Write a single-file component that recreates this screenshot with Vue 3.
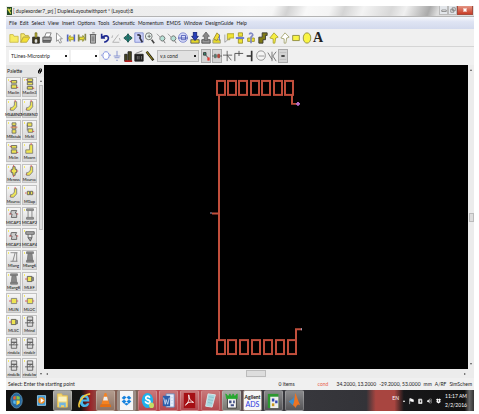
<script setup>
import { ref } from 'vue';

const menus = ['File', 'Edit', 'Select', 'View', 'Insert', 'Options', 'Tools', 'Schematic', 'Momentum', 'EMDS', 'Window', 'DesignGuide', 'Help'];

// toolbar buttons, grouped the way they sit between separators
const groups = [
  ['new', 'open', 'save', 'print'],
  ['cursor'],
  ['moveL', 'moveR', 'trash'],
  ['undo', 'rotate'],
  ['pan', 'fit', 'zoom', 'zoomIn', 'zoomOut', 'zoomSel'],
  ['push', 'pop', 'clean'],
  ['flip', 'globe', 'lamp'],
  ['trace', 'polyY', 'poly', 'rect', 'circle', 'text'],
];
const insertTools = ['port', 'ground', 'book', 'clap', 'pencil'];
const snapTools = ['snapA', 'snapB', 'pin', 'vertex', 'edge', 'arc', 'cross', 'grid'];
const pressed = ['snapA', 'snapB', 'grid'];

// plain stroke/fill shapes on a 12 x 14 grid: [path, fill, stroke, width]
const icons = {
  new: [['M1 3h4l1 2h5v7H1z', '#f7ec62', '#c9b94a']],
  open: [['M1 2h4l1 2h4v2H4L1 12z', '#f7ea6a', '#b8a73d'], ['M4 6h8l-4 6H1z', '#f3df32', '#b8a73d']],
  save: [['M2 6h8v7H2z', '#3f3a20', '#222'], ['M5 9h2v3H5z', '#fff', '#ddd'], ['M5 6V1h2v5', '#eadb26', '#65601e']],
  print: [['M3 6l2-5h6L9 6z', '#fff', '#777'], ['M1 6h10v4H1z', '#aaa', '#555'], ['M1 10h9v2H1z', '#777', '#555']],
  cursor: [['M3 1v10l2-2 2 4 2-1-2-4h3z', '#fff', '#888']],
  moveL: [['M2 3v8M10 3v8', 'none', '#5567c0', 2], ['M3 7l2-3v2h4v3H5v2z', '#f0e22e', '#a39a30']],
  moveR: [['M2 3v8M10 2v8', 'none', '#85884e', 2], ['M9 7L7 4v2H3v3h4v2z', '#f0e22e', '#8a8a30']],
  trash: [['M3 3h6v10H3z', '#bbb', '#555'], ['M2 3h8M5 1h3M5 5v6M7 5v6', 'none', '#666']],
  undo: [['M2 2v5h4M3 6c8-5 10 4 2 6', 'none', '#1f2b91', 2]],
  rotate: [['M2 12h8M2 12L9 3M2 4l-1 3M10 7l1 3', 'none', '#aaa']],
  pan: [['M6 2l2 3H7v1h2V5l2 2-2 2V8H7v1h1l-2 3-2-3h1V8H3v1L1 7l2-2v1h2V5H4z', '#137e73', '#174c48']],
  fit: [['M1 1h10v11H1z', '#cdd2f8', '#7c88d0'], ['M4 4a2 2 0 1 1 3 3l3 5', 'none', '#334', 2]],
  zoom: [['M5 1a4 4 0 1 1-1 8 4 4 0 0 1 1-8M3 5h4M5 3v4', '#e9f3ef', '#666'], ['M8 9l3 4', 'none', '#444', 2]],
  zoomIn: [['M1 2l4 4', 'none', '#999'], ['M6 5a3 3 0 1 1 0 5 3 3 0 0 1 0-5M9 10l2 3', '#b7e1d6', '#666']],
  zoomOut: [['M1 2l4 4', 'none', '#999'], ['M6 5a3 3 0 1 1 0 5 3 3 0 0 1 0-5M9 10l2 3', '#b7e1d6', '#666']],
  zoomSel: [['M6 1c7 0 7 11 0 11S-1 1 6 1', '#dfe3fc', '#7079c8'], ['M0 7h12M4 4h5v5H4z', 'none', '#4450ae']],
  push: [['M1 9h10v4H1z', '#e5d829', '#555'], ['M4 0h4v5h2l-4 5-4-5h2z', '#2940b8', '#16246f']],
  pop: [['M1 9h10v4H1z', '#999', '#444'], ['M4 10h4V5h2L6 0 2 5h2z', '#888', '#666']],
  clean: [['M1 9h9v4H1z', '#e5d829', '#998'], ['M6 1l3 3-3 6-4-2z', '#f2df32', '#96852d'], ['M9 3v7', 'none', '#5567c8']],
  flip: [['M4 2h8v5H7v2H4z', '#efe334', '#a8a02d'], ['M1 12l6-5M1 3v9', 'none', '#999']],
  globe: [['M4 1h5v4H4zM4 8h5v5H4z', '#efe334', '#98902d'], ['M1 7h10', 'none', '#5a6ccf', 2]],
  lamp: [['M2 7h8v4H2z', '#efe334', '#98902d'], ['M4 3a2 2 0 1 1 4 1L6 6v7', 'none', '#8088c4', 2]],
  trace: [['M11 1H5v5H1v7h5V9h3V4h2z', '#817b16', '#333']],
  polyY: [['M6 1l5 5-3 1-1 6H5V8L1 7z', '#f6ef42', '#a8a131']],
  poly: [['M6 1l5 5-3 1-1 6H5V8L1 7z', '#fff', '#a0a068']],
  rect: [['M2 4h8v6H2z', '#faf545', '#88863a']],
  circle: [['M6 1c6 0 6 12 0 12S0 1 6 1', '#faf545', '#88863a']],
  port: [['M6 2c5 0 5 9 0 9S1 2 6 2M0 6h1M10 6h2', '#fff', '#7080dd']],
  ground: [['M6 1v6M2 7h8M3 9h6M5 12h2', 'none', '#7a88cc']],
  book: [['M2 5h3v8H2zM6 2h4v11H6z', '#4a4720', '#222'], ['M2 13h9', 'none', '#b51f1f', 2]],
  clap: [['M1 5h10v8H1z', '#222', '#222'], ['M2 4l8-3M4 7v4M6 7v4M9 7v4', 'none', '#777']],
  pencil: [['M2 2l8 10', 'none', '#24210e', 3], ['M2 2l7 9', 'none', '#c5b42b', 1]],
  snapA: [['M3 3h3v3H3z', '#3b8f72', '#333'], ['M6 6l3 4', 'none', '#444'], ['M8 9h2v3H8z', '#e63025', '#e6605a']],
  snapB: [['M0 7h12', 'none', '#555'], ['M3 5h2v4H3z', '#3b8f72', '#666'], ['M7 5h2v4H7z', '#cf4e28', '#944']],
  pin: [['M5 1v12M0 6h11M5 6l5 6', 'none', '#555']],
  vertex: [['M1 13V4h10M6 1v6', 'none', '#444']],
  edge: [['M8 1v12M2 7h6', 'none', '#333', 2]],
  arc: [['M6 1c7 0 7 11 0 11S-1 1 6 1M3 7h7', '#f4f4f4', '#888']],
  cross: [['M1 3l5 8M6 2v11M7 7l4-5M7 7l4 6', 'none', '#666']],
  grid: [['M2 3h8M2 11h8', 'none', '#bbb'], ['M4 7h4', 'none', '#333', 2]],
};

// palette component symbols
const Y = '#eee453';
const sym = {
  line: [['M3 3h7v3H3zM3 8h7v4H3z', Y, '#555'], ['M1 4h2M10 11h2', 'none', '#d44']],
  line3: [['M3 1h7v3H3zM3 5h7v3H3zM3 10h7v3H3z', Y, '#555'], ['M1 2h2M10 12h2', 'none', '#d44']],
  bend: [['M7 2h3v6l-4 4H2V9h2l3-3z', Y, '#777'], ['M8 0v2M1 11h1', 'none', '#d44']],
  step: [['M4 1h5v3H4zM4 5h5v3H4zM4 9h5v4H4z', Y, '#666'], ['M2 6h9', 'none', '#d66']],
  curl: [['M3 1h6v4H3zM4 8h6v4H4z', Y, '#666'], ['M3 3v7', 'none', '#666'], ['M10 11h2', 'none', '#d44']],
  corn: [['M6 2h4v10H1V8h5z', Y, '#777'], ['M8 0v2', 'none', '#d44']],
  cros: [['M5 2h3v3h2v4H8v3H5V9H3V5h2z', Y, '#555'], ['M6 0v2M1 7h2M10 7h2M6 12v2', 'none', '#d44']],
  gap: [['M3 5h3v4H3zM7 5h3v4H7z', Y, '#555'], ['M0 7h2M11 7h1', 'none', '#d44']],
  cap: [['M3 3h7l-2 3h2v5H3l1-4H2z', '#ccc', '#555'], ['M0 7h3M10 7h2', 'none', '#d44']],
  beam: [['M2 1h9v2H2zM2 11h9v2H2zM4 3v8M9 3v8', '#999', '#777']],
  gnd: [['M1 2h11v3H1zM4 5v4M9 5v4M4 9h5l-2 4z', '#aaa', '#555']],
  lang: [['M2 2h9M2 12h9M8 2L5 12M10 2v10', '#bbb', '#777']],
  langs: [['M2 1h9v2H2zM2 11h9v2H2zM4 3h5l1 8H3z', '#888', '#777']],
  ref: [['M3 4h6v6H3z', Y, '#555'], ['M9 5h2v4H9z', '#999', '#666'], ['M0 7h3', 'none', '#d44']],
  stub: [['M3 4h7v6H3z', Y, '#777'], ['M0 7h3M10 7h2', 'none', '#d44']],
  ind: [['M3 1h7v4H3zM3 5h7v7H3z', '#ddd', '#555'], ['M0 8h12M5 8l3-3', 'none', '#555']],
};
const palette = [
  ['Maclin', 'line'], ['Maclin3', 'line3'],
  ['MSABND', 'bend'], ['MSBEND', 'bend'],
  ['MBstub', 'step'], ['Mcfil', 'curl'],
  ['Mclin', 'line'], ['Mcorn', 'corn'],
  ['Mcross', 'cros'], ['Mcurve', 'bend'],
  ['Mcurve', 'bend'], ['MGap', 'gap'],
  ['MICAP1', 'cap'], ['MICAP2', 'beam'],
  ['MICAP3', 'cap'], ['MICAP4', 'gnd'],
  ['Mlang', 'lang'], ['Mlang6', 'langs'],
  ['Mlang8', 'langs'], ['MLEF', 'ref'],
  ['MLIN', 'stub'], ['MLOC', 'stub'],
  ['MLSC', 'ref'], ['Mrind', 'ind'],
  ['rindela', 'ind'], ['rindelr', 'ind'],
  ['rindelb', 'ind'], ['rindelw', 'ind'],
];

const topRings = [217, 228, 239, 251, 262, 274, 285];
const bottomRings = [217, 228, 240, 252, 264, 276, 288];

const library = ref('TLines-Microstrip');
const history = ref('');
const layer = ref('v,s cond');
</script>

<template>
  <div class="screen">
    <header class="title">
      <svg class="logo" viewBox="0 0 8 10" preserveAspectRatio="none"><path d="M0 0h8v10H0z" fill="#234b25" /><path d="M1 2l5 6M6 2L3 5" stroke="#d9d94a" stroke-width="2" /></svg>
      <span class="caption">[ duplexorder7_prj ] DuplexLayoutwithport * (Layout):8</span>
      <button class="win" aria-label="Minimize"><svg viewBox="0 0 8 8"><path d="M1 4h6v2H1z" fill="#fff" stroke="#777" /></svg></button>
      <button class="win" aria-label="Restore"><svg viewBox="0 0 8 8"><path d="M3 1h4v4H3zM1 3h4v4H1z" fill="#eee" stroke="#777" /></svg></button>
      <button class="win close" aria-label="Close"><svg viewBox="0 0 8 8"><path d="M2 2l4 4M6 2L2 6" stroke="#fff" stroke-width="2" /></svg></button>
    </header>

    <nav class="menu">
      <button v-for="m in menus" :key="m">{{ m }}</button>
    </nav>

    <div class="toolbar">
      <div v-for="(g, i) in groups" :key="i" class="group">
        <button v-for="name in g" :key="name" class="tool" :aria-label="name">
          <span v-if="name === 'text'" class="letter">A</span>
          <svg v-else viewBox="0 0 12 14" preserveAspectRatio="none">
            <path v-for="(p, k) in icons[name]" :key="k" :d="p[0]" :fill="p[1]" :stroke="p[2]" :stroke-width="p[3] || 1" />
          </svg>
        </button>
      </div>
    </div>

    <div class="toolbar second">
      <select v-model="library" class="pick wide" aria-label="Palette library"><option>TLines-Microstrip</option></select>
      <select v-model="history" class="pick short" aria-label="Component history"><option></option></select>
      <div class="group">
        <button v-for="name in insertTools" :key="name" class="tool" :aria-label="name">
          <svg viewBox="0 0 12 14" preserveAspectRatio="none">
            <path v-for="(p, k) in icons[name]" :key="k" :d="p[0]" :fill="p[1]" :stroke="p[2]" :stroke-width="p[3] || 1" />
          </svg>
        </button>
      </div>
      <select v-model="layer" class="pick layer" aria-label="Layer"><option>v,s cond</option></select>
      <div class="group">
        <button v-for="name in snapTools" :key="name" class="tool" :class="{ on: pressed.includes(name) }" :aria-label="name">
          <svg viewBox="0 0 12 14" preserveAspectRatio="none">
            <path v-for="(p, k) in icons[name]" :key="k" :d="p[0]" :fill="p[1]" :stroke="p[2]" :stroke-width="p[3] || 1" />
          </svg>
        </button>
      </div>
    </div>

    <main class="work">
      <aside class="palette">
        <div class="phead">
          <span>Palette</span>
          <svg viewBox="0 0 8 10"><path d="M3 1h4v5H3zM1 4h4v5H1z" fill="#fff" stroke="#111" stroke-width="2" /></svg>
        </div>
        <div class="pbody">
          <div class="parts">
            <button v-for="(c, i) in palette" :key="i" class="part">
              <svg viewBox="0 0 13 14" preserveAspectRatio="none">
                <path v-for="(p, k) in sym[c[1]]" :key="k" :d="p[0]" :fill="p[1]" :stroke="p[2]" />
              </svg>
              <span>{{ c[0] }}</span>
            </button>
          </div>
          <div class="vbar">
            <i class="up"></i>
            <i class="thumb"></i>
            <i class="rest"></i>
            <i class="down"></i>
          </div>
        </div>
      </aside>

      <section class="sheet">
        <svg class="canvas" viewBox="44 65 424 305" preserveAspectRatio="none">
          <g fill="none" stroke="#c14f3c" stroke-width="2">
            <rect v-for="x in topRings" :key="'t' + x" :x="x" y="81" width="8" height="14" />
            <rect v-for="x in bottomRings" :key="'b' + x" :x="x" y="341" width="8" height="14" />
            <path d="M219 95V341M212 214H219M292 95v9h5M296 341v-11h6" />
          </g>
          <path d="M297 102h2v1h1v2h-1v1h-2v-1h-1v-2h1z" fill="#b26ac0" />
          <path d="M210 213h2v1h-2zM301 329h1v2h-1z" fill="#9b9fc0" />
        </svg>
        <div class="side">
          <i class="up"></i>
          <i class="knob"></i>
          <i class="down"></i>
        </div>
        <div class="bottom">
          <i class="left"></i>
          <i class="knob"></i>
          <i class="right"></i>
        </div>
      </section>
    </main>

    <footer class="status">
      <span class="hint">Select: Enter the starting point</span>
      <span class="items">0 items</span>
      <span class="cond">cond</span>
      <span>34.2000, 13.2000</span>
      <span>-29.2000, 53.0000</span>
      <span>mm</span>
      <span>A/RF</span>
      <span>SimSchem</span>
    </footer>

    <div class="taskbar">
      <button class="task bare start" aria-label="Start">
        <svg viewBox="0 0 16 18" preserveAspectRatio="none"><ellipse cx="8" cy="9" rx="7" ry="8" fill="#2769a0" stroke="#5f94b6" /><path d="M4 5l3-1v4H4z" fill="#f0652f" /><path d="M8 4l4 1v3H8z" fill="#8cc63f" /><path d="M4 9h3v4l-3-1z" fill="#59b9ee" /><path d="M8 9h4v3l-4 2z" fill="#fbd13d" /></svg>
      </button>
      <button class="task bare" aria-label="Media Player">
        <svg viewBox="0 0 16 18"><path d="M3 3h10v12H3z" fill="#3d9bd8" stroke="#a6d6f4" /><circle cx="8" cy="9" r="4" fill="#f28a20" /><path d="M7 6l4 3-4 3z" fill="#fff" /></svg>
      </button>
      <button class="task lit" aria-label="Explorer">
        <svg viewBox="0 0 16 18" preserveAspectRatio="none"><path d="M2 2h5l1 2h6v12H2z" fill="#f3d777" stroke="#e9c24e" /><path d="M3 5h10v5H3z" fill="#fbf2c0" /><path d="M4 11h8v5h-2v-2H6v2H4z" fill="#71b5df" /></svg>
      </button>
      <button class="task bare" aria-label="Internet Explorer">
        <svg viewBox="0 0 16 18" preserveAspectRatio="none"><path d="M8 3c4 0 6 3 6 7H6c0 4 4 4 5 2h3c-1 3-3 4-6 4-8 0-8-13 0-13M6 8h5c0-3-5-3-5 0" fill="#48b8ed" fill-rule="evenodd" /><path d="M2 16C-1 14 4 3 15 2" fill="none" stroke="#f3c93d" stroke-width="2" /></svg>
      </button>
      <button class="task tan" aria-label="VLC">
        <svg viewBox="0 0 16 18" preserveAspectRatio="none"><path d="M7 1h2l4 12H3z" fill="#f58220" /><path d="M6 5h4l1 4H5z" fill="#eee" /><path d="M2 13h12l1 3H1z" fill="#e66f10" /></svg>
      </button>
      <button class="task white" aria-label="Dropbox">
        <svg viewBox="0 0 16 18"><path d="M5 3l3 2-3 3-3-2zM11 3l3 3-3 2-3-3zM5 8l3 2-3 3-3-3zM11 8l3 2-3 3-3-3zM8 12l3 1-3 2-3-2z" fill="#1683df" /></svg>
      </button>
      <button class="task rose" aria-label="Skype">
        <svg viewBox="0 0 16 18" preserveAspectRatio="none"><ellipse cx="8" cy="9" rx="7" ry="8" fill="#1eb2ec" /><path d="M11 6c-2-3-6-1-5 1s6 1 5 4c-1 2-5 1-6-1" fill="none" stroke="#fff" stroke-width="2" /><circle cx="13" cy="14" r="3" fill="#c2dc67" /></svg>
      </button>
      <button class="task rose" aria-label="Word">
        <svg viewBox="0 0 16 18" preserveAspectRatio="none"><path d="M5 2h10v14H5z" fill="#e8eefa" stroke="#6589bd" /><path d="M1 4h9v11H1z" fill="#2b5eab" /><path d="M2 6l2 7 1-5 2 5 2-7M11 6h3M11 9h3M11 12h3" fill="none" stroke="#c6d9f2" /></svg>
      </button>
      <button class="task rose" aria-label="Reader">
        <svg viewBox="0 0 16 18" preserveAspectRatio="none"><path d="M1 1h14v16H1z" fill="#a50f14" /><path d="M7 3c1 5 0 8-4 11 2-3 6-4 10-3-3-1-6-4-6-8z" fill="none" stroke="#fff" /></svg>
      </button>
      <button class="task rose" aria-label="Notepad">
        <svg viewBox="0 0 16 18" preserveAspectRatio="none"><path d="M5 2l9 1-4 13-8-1z" fill="#a9d7df" stroke="#d8eef2" /><path d="M6 5l6 1M5 8l6 1M5 11l5 1" stroke="#8cc0cc" /></svg>
      </button>
      <button class="task lit" aria-label="Layout">
        <svg viewBox="0 0 16 18" preserveAspectRatio="none"><path d="M3 5h11v12H3z" fill="#f5f5f5" stroke="#333" /><path d="M1 2l3 3 2-3 2 3 2-3 2 3 3-3v5H2z" fill="#26a92f" stroke="#26a92f" /><path d="M5 9h3v3H5zM10 9h2v3h-2zM7 13h4v2H7z" fill="#414f84" /></svg>
      </button>
      <button class="task white ads"><b>Agilent</b><span>ADS</span></button>
      <button class="task gray" aria-label="Schematic">
        <svg viewBox="0 0 16 18" preserveAspectRatio="none"><path d="M1 2h13v15H1z" fill="#2c9730" /><path d="M4 5h10v12H4z" fill="#eee" /><path d="M6 7h3v3H6zM10 9h3v3h-3z" fill="#3048b0" /><path d="M6 12h3v3H6z" fill="#c69a20" /></svg>
      </button>
      <button class="task gray" aria-label="MATLAB">
        <svg viewBox="0 0 16 18" preserveAspectRatio="none"><path d="M1 10l5-3 2-3 1 7-3 3z" fill="#3c8cc8" /><path d="M9 1c2 3 3 8 6 13-3-2-4 0-6 3-1-2-2-3-3-3 2-3 2-9 3-13" fill="#ed7422" /></svg>
      </button>
      <div class="tray">
        <span class="lang">EN</span>
        <i class="up light"></i>
        <svg viewBox="0 0 8 10"><path d="M1 1v9M2 1l5 2v3L2 5z" fill="#fff" stroke="#fff" /></svg>
        <svg viewBox="0 0 8 10"><path d="M1 2h5v7H1zM6 4v5" fill="#ddd" stroke="#fff" /><path d="M3 4h2v3H3z" fill="#333" /></svg>
        <svg viewBox="0 0 8 10"><path d="M0 4h2l2-3v8L2 6H0z" fill="#fff" /><path d="M5 3c2 1 2 3 0 4M6 1c3 2 3 6 0 8" fill="none" stroke="#ccc" /></svg>
        <svg viewBox="0 0 8 10"><path d="M2 1l2 1 2-1 2 2-2 2 2 1-4 3-4-3 2-1-2-2z" fill="#fff" /><path d="M4 3l1 2-1 1-1-1z" fill="#222" /></svg>
        <div class="clock"><span>11:17 AM</span><span>2/2/2016</span></div>
      </div>
    </div>
  </div>
</template>

<style>
body {
  background: #fff;
}
</style>

<style scoped>
.screen {
  box-sizing: border-box;
  height: 100vh;
  padding: 6px 5px 3px 6px;
  display: flex;
  flex-direction: column;
  font-family: Lato, "Liberation Sans", sans-serif;
  font-size: 5px;
  line-height: 8px;
  color: #222;
  white-space: nowrap;
}

button,
select {
  font: inherit;
  color: inherit;
  margin: 0;
  padding: 0;
  border: 0;
  border-radius: 0;
  background: none;
}

svg {
  display: block;
}

/* title and menu */
.title {
  display: flex;
  align-items: center;
  height: 11px;
  flex: none;
  box-sizing: border-box;
  padding-right: 1px;
  border-bottom: 1px solid #b4b4b4;
  background: linear-gradient(110deg, #ececec 0%, #eee 40%, #f8f8f8 52%, #f6f6f6 57%, #d2d2d2 60%, #f8f8f8 64%, #f4f4f4 69%, #d4d4d4 72%, #f3f3f3 76%, #d8d8d8 82%, #f0f0f0 85%, #aaa 90%, #ddd 92%);
}

.logo {
  width: 5px;
  height: 8px;
  margin: 0 1px;
}

.caption {
  flex: 1;
}

.win {
  display: flex;
  align-items: center;
  justify-content: center;
  width: 9px;
  height: 9px;
  align-self: flex-start;
  border: 1px solid #bbb;
  border-top: 0;
  box-sizing: border-box;
  background: #e3e6ea;
}

.win svg {
  width: 6px;
  height: 6px;
}

.close {
  width: 16px;
  border-color: #a54a3c;
  background: linear-gradient(#e39584, #c93d27);
}

.menu {
  display: flex;
  align-items: center;
  gap: 3px;
  height: 12px;
  flex: none;
  padding-left: 3px;
  background: linear-gradient(#f6f8fc, #dfe4f3 40%, #d3daed);
}

/* toolbars */
.toolbar {
  display: flex;
  align-items: center;
  gap: 2px;
  height: 17px;
  flex: none;
  padding-left: 3px;
  background: #f0f0f0;
  box-sizing: border-box;
}

.second {
  height: 19px;
  border-top: 1px solid #d5d5d5;
}

.group {
  display: flex;
  gap: 1px;
}

.tool {
  width: 10px;
  height: 14px;
  display: flex;
  align-items: center;
  justify-content: center;
}

.tool svg {
  width: 10px;
  height: 12px;
}

.on {
  background: #d4d4d4;
  box-shadow: inset 0 0 0 1px #aaa;
}

.letter {
  font-family: "Liberation Serif", serif;
  font-size: 14px;
  line-height: 14px;
  font-weight: bold;
  color: #222;
}

.pick {
  appearance: none;
  height: 12px;
  padding-left: 2px;
  background: #fff linear-gradient(#222, #222) no-repeat right 2px center / 2px 2px;
}

.wide {
  width: 60px;
}

.short {
  width: 28px;
}

.layer {
  width: 42px;
  border: 1px solid #bbb;
  background-color: #e2e2e2;
}

/* palette */
.work {
  flex: 1;
  min-height: 0;
  display: flex;
}

.palette {
  width: 38px;
  flex: none;
  display: flex;
  flex-direction: column;
  background: #f0f0f0;
}

.phead {
  display: flex;
  align-items: center;
  justify-content: space-between;
  height: 12px;
  padding: 0 2px 0 1px;
  background: #e6e6e6;
  flex: none;
}

.phead svg {
  width: 4px;
  height: 6px;
}

.pbody {
  flex: 1;
  min-height: 0;
  display: flex;
  gap: 1px;
}

.parts {
  flex: 1;
  min-width: 0;
  display: grid;
  grid-template-columns: repeat(2, minmax(0, 1fr));
  grid-auto-rows: minmax(0, 1fr);
  gap: 2px 1px;
}

.part {
  display: flex;
  flex-direction: column;
  align-items: center;
  justify-content: center;
  box-sizing: border-box;
  border: 1px solid #c2c2c2;
  background: linear-gradient(#f3e96c, #f3e96c) no-repeat 1px 1px / 1px 2px, linear-gradient(#f6f6f6, #d6d6d6);
  font-size: 4px;
  line-height: 5px;
  color: #000;
}

.part svg {
  width: 10px;
  height: 12px;
}

.vbar,
.side {
  display: flex;
  flex-direction: column;
  align-items: center;
  width: 6px;
  background: #ececec;
}

.vbar {
  padding: 3px 0;
  box-sizing: border-box;
}

.thumb {
  flex: 1;
  width: 4px;
  margin-top: 3px;
  border: 1px solid #bbb;
  box-sizing: border-box;
  background: #ddd;
}

.rest {
  flex: 1;
}

.up,
.down,
.left,
.right {
  width: 0;
  height: 0;
  border: 1px solid transparent;
}

.up {
  border-bottom: 2px solid #555;
  border-top: 0;
}

.down {
  border-top: 2px solid #555;
  border-bottom: 0;
}

.left {
  border-right: 2px solid #555;
  border-left: 0;
}

.right {
  border-left: 2px solid #555;
  border-right: 0;
}

/* drawing sheet */
.sheet {
  flex: 1;
  min-width: 0;
  display: grid;
  grid-template-columns: minmax(0, 1fr) 6px;
  grid-template-rows: minmax(0, 1fr) 9px;
}

.canvas {
  width: 100%;
  height: 100%;
  background: #000;
}

.side {
  justify-content: space-between;
  padding: 4px 0;
}

.bottom {
  grid-column: 1 / -1;
  display: flex;
  align-items: center;
  justify-content: space-between;
  padding: 0 8px 0 2px;
  background: #ececec;
}

.knob {
  width: 5px;
  height: 9px;
  border: 1px solid #bbb;
  box-sizing: border-box;
  background: #ddd;
}

.bottom .knob {
  width: 20px;
  height: 7px;
}

/* status line */
.status {
  display: flex;
  align-items: center;
  gap: 3px;
  height: 12px;
  flex: none;
  padding: 0 2px;
  background: #f0f0f0;
}

.hint {
  flex: 1;
}

.items {
  width: 36px;
}

.cond {
  width: 16px;
  color: #e8604c;
}

/* taskbar */
.taskbar {
  display: flex;
  gap: 2px;
  height: 21px;
  flex: none;
  color: #fff;
  background: linear-gradient(90deg, #111 0%, #151515 16%, #9a2428 18%, #8a5a50 20%, #7c6658 28%, #b8454a 30%, #bd5258 45%, #6b5555 49%, #3a3a3f 54%, #333338 77%, #a84540 79%, #a84540 83%, #18181a 85%, #111 98%, #666 99%, #333 100%);
}

.task {
  width: 19px;
  display: flex;
  align-items: center;
  justify-content: center;
  box-sizing: border-box;
  border: 1px solid #ffffff33;
  border-radius: 2px;
}

.task svg {
  width: 13px;
  height: 17px;
}

.bare {
  width: 20px;
  border: 0;
}

.start {
  margin-right: 3px;
}

.lit {
  background: linear-gradient(#aaa9a5, #77766f);
}

.tan {
  background: linear-gradient(#b39c8e, #8d7263);
}

.rose {
  background: linear-gradient(#c9787a, #b3474d);
}

.gray {
  background: linear-gradient(#8a8a8c, #555558);
}

.white {
  background: #f6f6f6;
  border: 2px solid #9c8f88;
  border-width: 1px 3px;
}

.ads {
  flex-direction: column;
  border-width: 1px;
  line-height: 7px;
  color: #111;
}

.ads span {
  font-size: 7px;
  color: #2a35e0;
}

.tray {
  display: flex;
  align-items: center;
  gap: 4px;
  margin-left: auto;
  padding-right: 7px;
}

.tray svg {
  width: 5px;
  height: 8px;
}

.lang {
  align-self: flex-start;
  line-height: 16px;
}

.light {
  border-bottom-color: #fff;
}

.clock {
  display: flex;
  flex-direction: column;
  align-items: center;
  line-height: 9px;
}
</style>
